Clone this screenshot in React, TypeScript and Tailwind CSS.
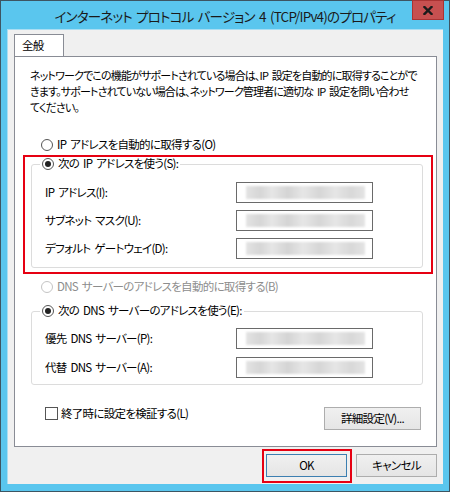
import React from 'react';

const font = "font-['Meiryo_UI','Noto_Sans_CJK_JP',sans-serif] [font-feature-settings:'palt']";

const Radio: React.FC<{ checked?: boolean; disabled?: boolean }> = ({ checked, disabled }) => (
  <span
    className={`flex items-center justify-center w-[12px] h-[12px] rounded-full border bg-white ${
      disabled ? 'border-[#c4c4c4]' : 'border-[#555]'
    }`}
  >
    {checked && <span className="w-[6px] h-[6px] rounded-full bg-[#222]" />}
  </span>
);

const IpField: React.FC = () => (
  <div className="w-[137px] h-[21px] border border-[#6a6a6a] bg-white flex items-center pl-[9px]">
    <div className="w-[119px] h-[13px] blur-[1px] bg-[linear-gradient(90deg,#e4e4e4,#d6d6d6_12%,#e6e6e6_22%,#d4d4d4_35%,#e6e6e6_48%,#d6d6d6_62%,#e6e6e6_75%,#d8d8d8_88%,#e4e4e4)]" />
  </div>
);

const FieldRow: React.FC<{ label: string }> = ({ label }) => (
  <div className="flex items-center h-[21px]">
    <span className="w-[204px] pl-[13px] whitespace-nowrap">{label}</span>
    <IpField />
  </div>
);

const Button: React.FC<{ label: string; primary?: boolean; className?: string }> = ({ label, primary, className }) => (
  <button
    className={`h-[23px] border bg-[linear-gradient(#f0f0f0,#e5e5e5)] text-black ${
      primary ? 'border-[#3c7fb1]' : 'border-[#adadad]'
    } ${className ?? ''}`}
  >
    {label}
  </button>
);

export default function App() {
  return (
    <div className={`w-[450px] h-[492px] bg-[#5ac6ee] border border-[#3d5562] flex flex-col text-[11.5px] tracking-[-0.7px] [word-spacing:2px] text-black ${font}`}>
      {/* title bar */}
      <div className="relative h-[28px] flex items-center justify-center">
        <span className="text-[13.5px] tracking-[-0.8px] text-[#1a1a1a] pt-[2px] whitespace-nowrap">
          インターネット プロトコル バージョン 4 (TCP/IPv4)のプロパティ
        </span>
        <div className="absolute right-[5px] top-[-1px] w-[32px] h-[20px] bg-[#c75050] border border-[#a33] flex items-center justify-center">
          <svg width="10" height="9" viewBox="0 0 10 9">
            <path d="M1.5 1 L8.5 8 M8.5 1 L1.5 8" stroke="#1b1b1b" strokeWidth="2.4" strokeLinecap="square" />
          </svg>
        </div>
      </div>

      {/* client area */}
      <div className="flex-1 mx-[6px] mb-[7px] bg-[#f0f0f0] border-l border-t border-[#a9def3] flex flex-col pl-[6px] pr-[6px]">
        <div className="pt-[4px] flex">
          <div className="w-[50px] h-[22px] bg-white border border-b-0 border-[#898c95] flex items-center pl-[7px]">
            全般
          </div>
        </div>
        <div className="h-[391px] bg-white border border-[#898c95] flex flex-col">
          <p className="pl-[15px] pt-[10px] leading-[16px] whitespace-nowrap text-[11px] tracking-[-0.85px]">
            ネットワークでこの機能がサポートされている場合は、IP 設定を自動的に取得することがで
            <br />
            きます。サポートされていない場合は、ネットワーク管理者に適切な IP 設定を問い合わせ
            <br />
            てください。
          </p>

          <div className="mt-[22px] ml-[26px] h-[16px] flex items-center gap-[4px]">
            <Radio />
            <span>IP アドレスを自動的に取得する(O)</span>
          </div>

          <div className="mt-[2px] ml-[8px] w-[410px] border-2 border-[#e60012] pl-[6px] pr-[8px] pb-[4px]">
            <fieldset className="border border-[#dcdcdc] rounded-[3px] pb-[8px]">
              <legend className="ml-[8px] px-[2px] h-[14px] flex items-center gap-[4px]">
                <Radio checked />
                <span>次の IP アドレスを使う(S):</span>
              </legend>
              <div className="mt-[11px] flex flex-col gap-[7px]">
                <FieldRow label="IP アドレス(I):" />
                <FieldRow label="サブネット マスク(U):" />
                <FieldRow label="デフォルト ゲートウェイ(D):" />
              </div>
            </fieldset>
          </div>

          <div className="mt-[5px] ml-[26px] h-[16px] flex items-center gap-[4px] text-[#8d8d8d]">
            <Radio disabled />
            <span>DNS サーバーのアドレスを自動的に取得する(B)</span>
          </div>

          <fieldset className="mt-[9px] ml-[16px] w-[392px] border border-[#dcdcdc] rounded-[3px] pb-[6px]">
            <legend className="ml-[8px] px-[2px] h-[14px] flex items-center gap-[4px]">
              <Radio checked />
              <span>次の DNS サーバーのアドレスを使う(E):</span>
            </legend>
            <div className="mt-[10px] flex flex-col gap-[8px]">
              <FieldRow label="優先 DNS サーバー(P):" />
              <FieldRow label="代替 DNS サーバー(A):" />
            </div>
          </fieldset>

          <div className="mt-[22px] flex items-start pl-[30px] pr-[15px]">
            <span className="w-[13px] h-[13px] border border-[#555] bg-white" />
            <span className="ml-[3px] flex-1 leading-[13px]">終了時に設定を検証する(L)</span>
            <Button label="詳細設定(V)..." className="w-[97px] h-[22px]" />
          </div>
        </div>

        <div className="flex justify-end items-start mt-[2px] gap-[4px]">
          <div className="border-2 border-[#e60012] pl-[2px] pr-[3px] pt-[3px] pb-[4px]">
            <Button label="OK" primary className="w-[81px]" />
          </div>
          <Button label="キャンセル" className="w-[81px] mt-[5px]" />
        </div>
      </div>
    </div>
  );
}
